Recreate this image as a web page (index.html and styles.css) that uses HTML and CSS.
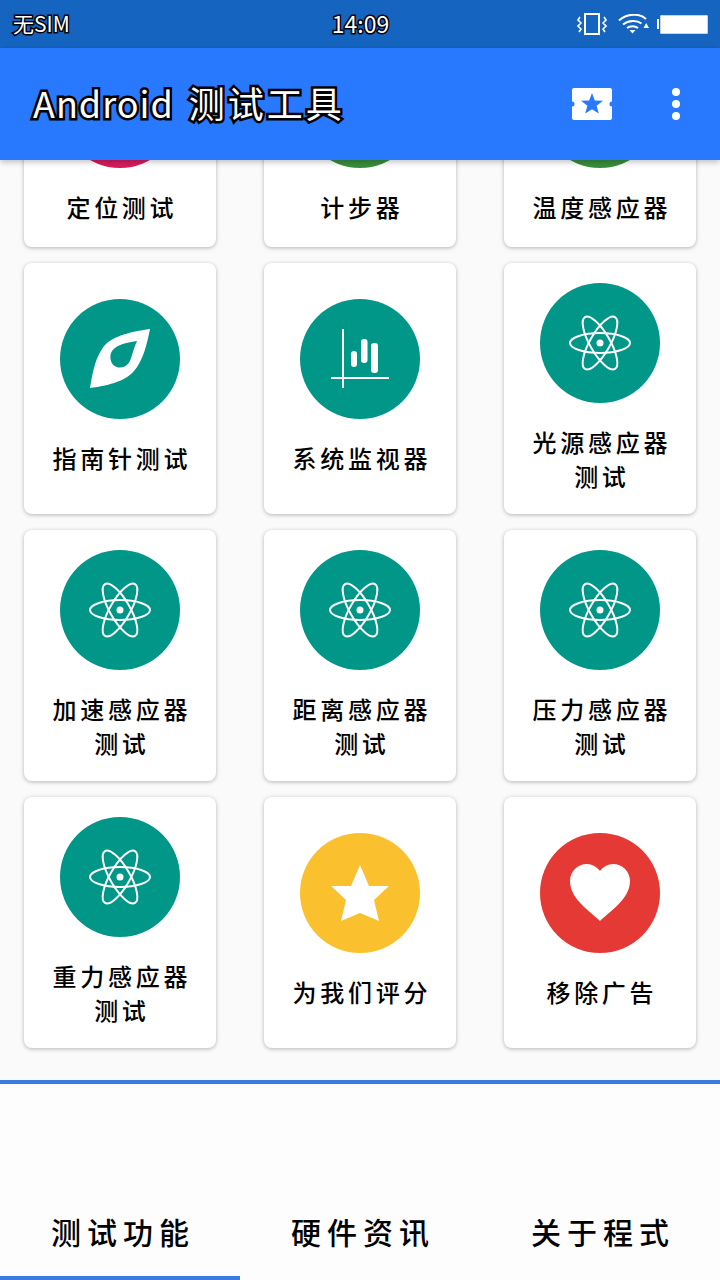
FILE: index.html
```html
<!DOCTYPE html>
<html lang="zh-CN">
<head>
<meta charset="utf-8">
<title>Android 测试工具</title>
<link rel="stylesheet" href="styles.css">
</head>
<body>
<svg class="defs" aria-hidden="true">
  <symbol id="atom" viewBox="0 0 120 120">
    <g fill="none" stroke="#fff" stroke-width="2">
      <ellipse cx="60" cy="60" rx="30" ry="10"/>
      <ellipse cx="60" cy="60" rx="30" ry="10" transform="rotate(60 60 60)"/>
      <ellipse cx="60" cy="60" rx="30" ry="10" transform="rotate(-60 60 60)"/>
    </g>
    <circle cx="60" cy="60" r="3.5" fill="#fff"/>
  </symbol>
</svg>

<div class="screen">
  <div class="status">
    <span class="status-text carrier">无SIM</span>
    <span class="status-text clock">14:09</span>
    <div class="status-icons">
      <svg class="ic-vibrate" width="30" height="24" viewBox="0 0 30 24">
        <rect x="8" y="2" width="14" height="20" fill="none" stroke="#fff" stroke-width="2"/>
        <path d="M3 5 L1 8 L4 11 L1 14 L4 17 L2 20 M27 5 L29 8 L26 11 L29 14 L26 17 L28 20" fill="none" stroke="#fff" stroke-width="1.6"/>
      </svg>
      <svg class="ic-wifi" width="31" height="20" viewBox="0 0 31 20">
        <path d="M1 6.5 C9 -1 22 -1 28 5" fill="none" stroke="#fff" stroke-width="2"/>
        <path d="M5 10.5 C10.500 6 19 6 23.500 9.500" fill="none" stroke="#fff" stroke-width="2"/>
        <path d="M9 14 C12 11.500 17 11.500 20 14" fill="none" stroke="#fff" stroke-width="2"/>
        <path d="M11.500 16 L14.500 19.500 L17.500 16 Z M25.500 14 L31 14 L28.200 9 Z" fill="#fff"/>
      </svg>
      <div class="battery"><span class="battery-nub"></span><span class="battery-body"></span></div>
    </div>
  </div>

  <header class="appbar">
    <h1 class="title">Android<span class="title-cjk">测试工具</span></h1>
    <svg class="ic-ticket" width="40" height="32" viewBox="0 0 40 32">
      <path d="M2 0 H38 A2 2 0 0 1 40 2 V13.500 A2.500 2.500 0 0 0 40 18.500 V30 A2 2 0 0 1 38 32 H2 A2 2 0 0 1 0 30 V18.500 A2.500 2.500 0 0 0 0 13.500 V2 A2 2 0 0 1 2 0 Z" fill="#fff"/>
      <path d="M20 5 L22.800 12.400 L31 12.800 L24.600 17.800 L26.800 25.500 L20 21.200 L13.200 25.500 L15.400 17.800 L9 12.800 L17.200 12.400 Z" fill="#2979ff"/>
    </svg>
    <div class="overflow-menu"><i></i><i></i><i></i></div>
  </header>

  <main class="scroller">
    <div class="grid">
      <a class="card"><span class="disc pink"></span><span class="label one-line">定位测试</span></a>
      <a class="card"><span class="disc green"></span><span class="label one-line">计步器</span></a>
      <a class="card"><span class="disc green"></span><span class="label one-line">温度感应器</span></a>

      <a class="card">
        <span class="disc teal">
          <svg viewBox="0 0 120 120"><path fill="#fff" fill-rule="evenodd" d="M90 30 C70 33 50 37 42 50 C34 62 32 78 30 89 C45 87 65 83 74 72 C83 62 87 45 90 30 Z M77 42 C72 53 72 60 68 65 C62 71 53 69 51 62 C49 55 52 50 58 47 C64 44 71 43 77 42 Z"/></svg>
        </span>
        <span class="label one-line">指南针测试</span>
      </a>
      <a class="card">
        <span class="disc teal">
          <svg viewBox="0 0 120 120">
            <rect x="42" y="30" width="2" height="59" fill="#fff"/>
            <rect x="31" y="78" width="58" height="2" fill="#fff"/>
            <rect x="51" y="52" width="6" height="16" rx="3" fill="#fff"/>
            <rect x="61" y="40" width="6.500" height="24" rx="3" fill="#fff"/>
            <rect x="71" y="44" width="7" height="30" rx="3" fill="#fff"/>
          </svg>
        </span>
        <span class="label one-line">系统监视器</span>
      </a>
      <a class="card"><span class="disc teal"><svg viewBox="0 0 120 120"><use href="#atom"/></svg></span><span class="label">光源感应器<br>测试</span></a>

      <a class="card"><span class="disc teal"><svg viewBox="0 0 120 120"><use href="#atom"/></svg></span><span class="label">加速感应器<br>测试</span></a>
      <a class="card"><span class="disc teal"><svg viewBox="0 0 120 120"><use href="#atom"/></svg></span><span class="label">距离感应器<br>测试</span></a>
      <a class="card"><span class="disc teal"><svg viewBox="0 0 120 120"><use href="#atom"/></svg></span><span class="label">压力感应器<br>测试</span></a>

      <a class="card"><span class="disc teal"><svg viewBox="0 0 120 120"><use href="#atom"/></svg></span><span class="label">重力感应器<br>测试</span></a>
      <a class="card">
        <span class="disc amber">
          <svg viewBox="0 0 120 120"><path fill="#fff" d="M60 32 L69 53 L89 53 L74 67 L79 88 L60 80 L41 88 L46 67 L31 53 L51 53 Z"/></svg>
        </span>
        <span class="label one-line">为我们评分</span>
      </a>
      <a class="card">
        <span class="disc red">
          <svg viewBox="0 0 120 120"><path fill="#fff" d="M60 88 C50 78 30 66 30 48 C30 38 38 31 47 31 C52 31 57 34 60 38 C63 34 68 31 73 31 C82 31 90 38 90 48 C90 66 70 78 60 88 Z"/></svg>
        </span>
        <span class="label one-line">移除广告</span>
      </a>
    </div>
  </main>

  <footer class="bottom">
    <nav class="tabs">
      <a class="tab active">测试功能</a>
      <a class="tab">硬件资讯</a>
      <a class="tab">关于程式</a>
    </nav>
  </footer>
</div>
</body>
</html>
```

FILE: styles.css
```css
* { box-sizing: border-box; }

html, body {
  margin: 0;
  padding: 0;
  background: #fafafa;
}

body {
  font-family: "Noto Sans CJK SC", "Noto Sans", sans-serif;
  color: #000;
}

.defs {
  display: none;
}

.screen {
  width: 720px;
  height: 1280px;
  display: flex;
  flex-direction: column;
  overflow: hidden;
}

/* Status bar */
.status {
  height: 48px;
  flex: none;
  background: #1565c0;
  display: grid;
  grid-template-columns: 1fr auto 1fr;
  align-items: center;
  padding: 0 12px 0 13px;
}

.status-text {
  color: #fff;
  line-height: 46px;
  height: 48px;
  -webkit-text-stroke: 3px #000;
  paint-order: stroke fill;
}

.carrier {
  font-size: 21px;
}

.clock {
  font-size: 23px;
}

.status-icons {
  display: flex;
  align-items: center;
  justify-content: flex-end;
  gap: 8px;
}

.ic-wifi {
  margin-left: 3px;
}

.battery {
  display: flex;
  align-items: center;
}

.battery-nub {
  width: 2px;
  height: 10px;
  background: #fff;
  margin-right: 1px;
}

.battery-body {
  width: 48px;
  height: 19px;
  background: #fff;
  border-radius: 2px;
  box-shadow: inset 0 0 0 1px #bcd6f2;
}

/* App bar */
.appbar {
  position: relative;
  z-index: 2;
  height: 112px;
  flex: none;
  background: #2979ff;
  box-shadow: 0 2px 6px rgba(0, 0, 0, 0.25);
  display: flex;
  align-items: center;
  padding: 0 40px 0 33px;
}

.title {
  margin: 0 auto 4px 0;
  font-size: 36px;
  font-weight: 400;
  letter-spacing: 1px;
  color: #fff;
  -webkit-text-stroke: 5px #000;
  paint-order: stroke fill;
}

.title-cjk {
  margin-left: 15px;
  letter-spacing: 3px;
}

.overflow-menu {
  margin-left: 60px;
  display: flex;
  flex-direction: column;
  gap: 4px;
}

.overflow-menu i {
  display: block;
  width: 8px;
  height: 8px;
  border-radius: 50%;
  background: #fff;
}

/* Scrolled list of tools */
.scroller {
  height: 920px;
  flex: none;
  overflow: hidden;
}

.grid {
  margin-top: -132px;
  padding: 0 24px;
  display: grid;
  grid-template-columns: repeat(3, 192px);
  column-gap: 48px;
  row-gap: 16px;
}

.card {
  background: #fff;
  border-radius: 8px;
  box-shadow: 0 1px 4px rgba(0, 0, 0, 0.28);
  padding: 20px 0 21px;
  display: flex;
  flex-direction: column;
  align-items: center;
  justify-content: center;
  gap: 22px;
}

.disc {
  width: 120px;
  height: 120px;
  border-radius: 50%;
  display: block;
  flex: none;
}

.disc svg {
  display: block;
  width: 120px;
  height: 120px;
}

.pink { background: #d81b60; }
.green { background: #388e3c; }
.teal { background: #009688; }
.amber { background: #fbc02d; }
.red { background: #e53935; }

.label {
  font-size: 24px;
  line-height: 34px;
  letter-spacing: 3.7px;
  text-align: center;
  margin-right: -3.7px;
  font-weight: 500;
}

.one-line {
  padding-bottom: 2px;
}

/* Bottom tabs */
.bottom {
  flex: 1;
  background: #fdfdfd;
  border-top: 4px solid #3a7be0;
  display: flex;
  flex-direction: column;
  justify-content: flex-end;
}

.tabs {
  display: grid;
  grid-template-columns: repeat(3, 240px);
}

.tab {
  height: 96px;
  padding: 5px 0 0 6px;
  border-bottom: 4px solid transparent;
  font-size: 30px;
  line-height: 84px;
  letter-spacing: 6px;
  font-weight: 500;
  text-align: center;
}

.tab.active {
  border-bottom-color: #3a7be0;
}
```
